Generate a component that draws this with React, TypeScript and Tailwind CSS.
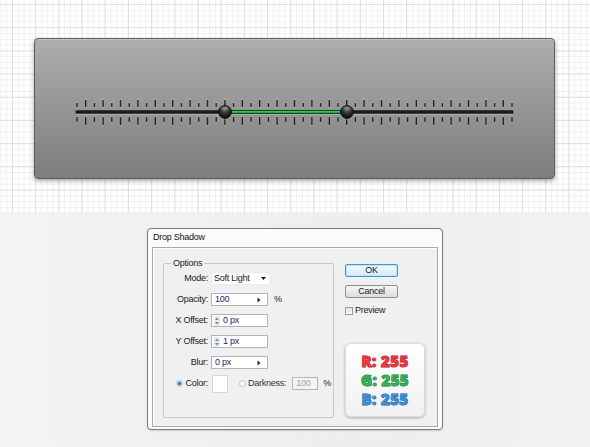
import React from 'react';

const ticks = Array.from({ length: 51 }, (_, i) => ({ x: 42 + i * 8.7, tall: i % 2 === 1 }));

const Slider = () => (
  <svg width="519" height="139" viewBox="0 0 519 139">
    <defs>
      <radialGradient id="knob" cx="50%" cy="25%" r="75%">
        <stop offset="0" stopColor="#7a7a7a" />
        <stop offset="0.55" stopColor="#2a2a2a" />
        <stop offset="1" stopColor="#0a0a0a" />
      </radialGradient>
    </defs>
    {ticks.map((t, i) => (
      <g key={i}>
        <rect x={t.x - 0.7} y={t.tall ? 60 : 63} width="1.4" height={t.tall ? 9 : 6} fill="#cfcfcf" opacity="0.55" />
        <rect x={t.x - 0.7} y={t.tall ? 61 : 64} width="1.4" height={t.tall ? 7 : 4} fill="#222" />
        <rect x={t.x - 0.7} y="77" width="1.4" height={t.tall ? 10 : 7} fill="#cfcfcf" opacity="0.55" />
        <rect x={t.x - 0.7} y="78" width="1.4" height={t.tall ? 8 : 5} fill="#222" />
      </g>
    ))}
    <line x1="42" y1="75.5" x2="477" y2="75.5" stroke="#c4c4c4" strokeWidth="1" opacity="0.6" />
    <line x1="42" y1="73" x2="477" y2="73" stroke="#1b1b1b" strokeWidth="3.5" strokeLinecap="round" />
    <line x1="190" y1="73" x2="312" y2="73" stroke="#0b4a17" strokeWidth="3.5" />
    <line x1="190" y1="72.8" x2="312" y2="72.8" stroke="#27d04e" strokeWidth="1.8" />
    {[190, 312].map((cx) => (
      <g key={cx}>
        <circle cx={cx} cy="74" r="6.8" fill="#bdbdbd" opacity="0.5" />
        <circle cx={cx} cy="73" r="6.5" fill="url(#knob)" stroke="#0c0c0c" strokeWidth="0.8" />
        <ellipse cx={cx} cy="69.5" rx="3.5" ry="1.8" fill="#fff" opacity="0.18" />
      </g>
    ))}
  </svg>
);

const Input = ({
  value,
  w,
  arrow,
  spinner,
  disabled
}: {
  value: string;
  w: string;
  arrow?: boolean;
  spinner?: boolean;
  disabled?: boolean;
}) => (
  <div
    className={`${w} h-[13px] flex items-center border border-[#b4b4b4] ${
      disabled ? 'bg-[#f4f4f4] text-[#a0a0a0]' : 'bg-white text-[#2c2462]'
    }`}
  >
    {spinner && (
      <svg width="6" height="10" viewBox="0 0 6 10" className="ml-[2px] mr-[2px]">
        <rect x="0" y="0" width="6" height="10" rx="1" fill="#e4ebf3" />
        <path d="M1 4 L3 1.5 L5 4 Z" fill="#6f8db3" />
        <path d="M1 6 L3 8.5 L5 6 Z" fill="#6f8db3" />
      </svg>
    )}
    <span className={spinner ? 'ml-[1px]' : 'ml-[3px]'}>{value}</span>
    {arrow && (
      <span className="ml-auto mr-[6px] flex items-center">
        <svg width="4" height="6" viewBox="0 0 4 6">
          <path d="M0.5 0.5 L3.5 3 L0.5 5.5 Z" fill="#222" />
        </svg>
      </span>
    )}
  </div>
);

const Row = ({ label, children }: { label: React.ReactNode; children: React.ReactNode }) => (
  <div className="flex items-center h-[21px]">
    <div className="w-[44px] flex justify-end items-center">{label}</div>
    <div className="ml-[3px] flex items-center">{children}</div>
  </div>
);

const Radio = ({ on }: { on?: boolean }) => (
  <svg width="7" height="7" viewBox="0 0 7 7">
    <circle cx="3.5" cy="3.5" r="3.1" fill={on ? '#eaf3fb' : '#f6f6f6'} stroke="#a9b3bd" strokeWidth="0.7" />
    {on && <circle cx="3.5" cy="3.5" r="1.9" fill="#2f7fc1" />}
  </svg>
);

const Rgb = ({ text, fill, edge }: { text: string; fill: string; edge: string }) => (
  <div
    className="h-[19px] leading-[19px]"
    style={{
      color: fill,
      WebkitTextStroke: `1px ${edge}`,
      paintOrder: 'stroke fill'
    }}
  >
    {text}
  </div>
);

const Dialog = () => (
  <div className="w-[296px] h-[202px] flex flex-col rounded-[4px] border border-[#7b7b7b] bg-[#fbfbfb] px-[4px] pb-[2px] shadow-[0_1px_2px_rgba(0,0,0,0.15)]">
    <div className="h-[18px] flex items-center pl-[1px] text-[9px] text-[#111]">Drop Shadow</div>
    <div className="flex-1 flex items-start border border-[#a9a9a9] bg-[#f0f0f0] pl-[10px] pt-[10px] shadow-[inset_1px_1px_0_#fff]">
      <fieldset className="w-[171px] h-[160px] p-0 m-0 border border-[#c8c8c8] rounded-[2px]">
        <legend className="ml-[7px] px-[2px] text-[9px] leading-[11px]">Options</legend>
        <div className="-mt-[1px]">
          <Row label="Mode:">
            <div className="w-[59px] h-[13px] flex items-center bg-white border border-[#ececec]">
              <span className="ml-[2px]">Soft Light</span>
              <svg width="5" height="3" viewBox="0 0 5 3" className="ml-auto mr-[3px]">
                <path d="M0 0 L5 0 L2.5 3 Z" fill="#111" />
              </svg>
            </div>
          </Row>
          <Row label="Opacity:">
            <Input value="100" w="w-[57px]" arrow />
            <span className="ml-[6px]">%</span>
          </Row>
          <Row label="X Offset:">
            <Input value="0 px" w="w-[57px]" spinner />
          </Row>
          <Row label="Y Offset:">
            <Input value="1 px" w="w-[57px]" spinner />
          </Row>
          <Row label="Blur:">
            <Input value="0 px" w="w-[57px]" arrow />
          </Row>
          <div className="flex items-center h-[21px]">
            <div className="w-[44px] flex justify-end items-center gap-[2px]">
              <Radio on />
              <span>Color:</span>
            </div>
            <div className="ml-[4px] w-[16px] h-[18px] bg-white border border-[#d6d6d6]" />
            <div className="ml-[11px] flex items-center gap-[2px]">
              <Radio />
              <span className="text-[#333]">Darkness:</span>
            </div>
            <div className="ml-[6px]">
              <Input value="100" w="w-[26px]" disabled />
            </div>
            <span className="ml-[5px]">%</span>
          </div>
        </div>
      </fieldset>
      <div className="ml-[11px] mt-[6px] flex flex-col">
        <div className="w-[53px] h-[13px] flex items-center justify-center rounded-[2px] border border-[#3d9ad6] bg-[linear-gradient(#f2f9fd,#d6ebf8)] shadow-[inset_0_0_0_1px_#bfe3f7]">
          OK
        </div>
        <div className="mt-[8px] w-[53px] h-[13px] flex items-center justify-center rounded-[2px] border border-[#8e8e8e] bg-[linear-gradient(#f6f6f6,#dcdcdc)]">
          Cancel
        </div>
        <div className="mt-[8px] flex items-center gap-[2px] h-[9px]">
          <div className="w-[8px] h-[8px] border border-[#9a9a9a] bg-[linear-gradient(#e4e4e4,#fafafa)]" />
          <span>Preview</span>
        </div>
        <div className="mt-[28px] w-[80px] h-[74px] flex flex-col items-center justify-center rounded-[6px] border border-[#dcdcdc] bg-[linear-gradient(#ffffff,#f1f1f1)] shadow-[0_1px_3px_rgba(0,0,0,0.3)] font-['Open_Sans',sans-serif] font-extrabold text-[15px] tracking-[0.4px]">
          <Rgb text="R: 255" fill="#ec3742" edge="#b0141e" />
          <Rgb text="G: 255" fill="#35b155" edge="#177033" />
          <Rgb text="B: 255" fill="#3b8fd6" edge="#1b5e9e" />
        </div>
      </div>
    </div>
  </div>
);

const App = () => (
  <div className="w-[590px] h-[447px] overflow-hidden flex flex-col font-['Liberation_Sans',Arial,sans-serif] text-[9px] tracking-[-0.25px] text-[#1a1a1a]">
    <div className="h-[213px] shrink-0 pt-[38px] pl-[34px] bg-white bg-[linear-gradient(to_right,#e0e0e0_1px,transparent_1px),linear-gradient(to_bottom,#e0e0e0_1px,transparent_1px),linear-gradient(to_right,#f0f0f0_1px,transparent_1px),linear-gradient(to_bottom,#f0f0f0_1px,transparent_1px)] [background-size:23.2px_23.2px,23.2px_23.2px,5.8px_5.8px,5.8px_5.8px] [background-position:12px_4px,12px_4px,0.4px_4px,0.4px_4px]">
      <div className="w-[521px] h-[141px] rounded-[4px] border border-[#5c5c5c] bg-[linear-gradient(#aeaeae,#7d7d7d)] shadow-[0_2px_4px_rgba(0,0,0,0.35),inset_0_1px_0_#c4c4c4]">
        <Slider />
      </div>
    </div>
    <div className="flex-1 bg-[linear-gradient(to_right,#f3f3f3,#eeeeee_60%,#f1f1f1)] pt-[15px] pl-[147px]">
      <Dialog />
    </div>
  </div>
);

export default App;
